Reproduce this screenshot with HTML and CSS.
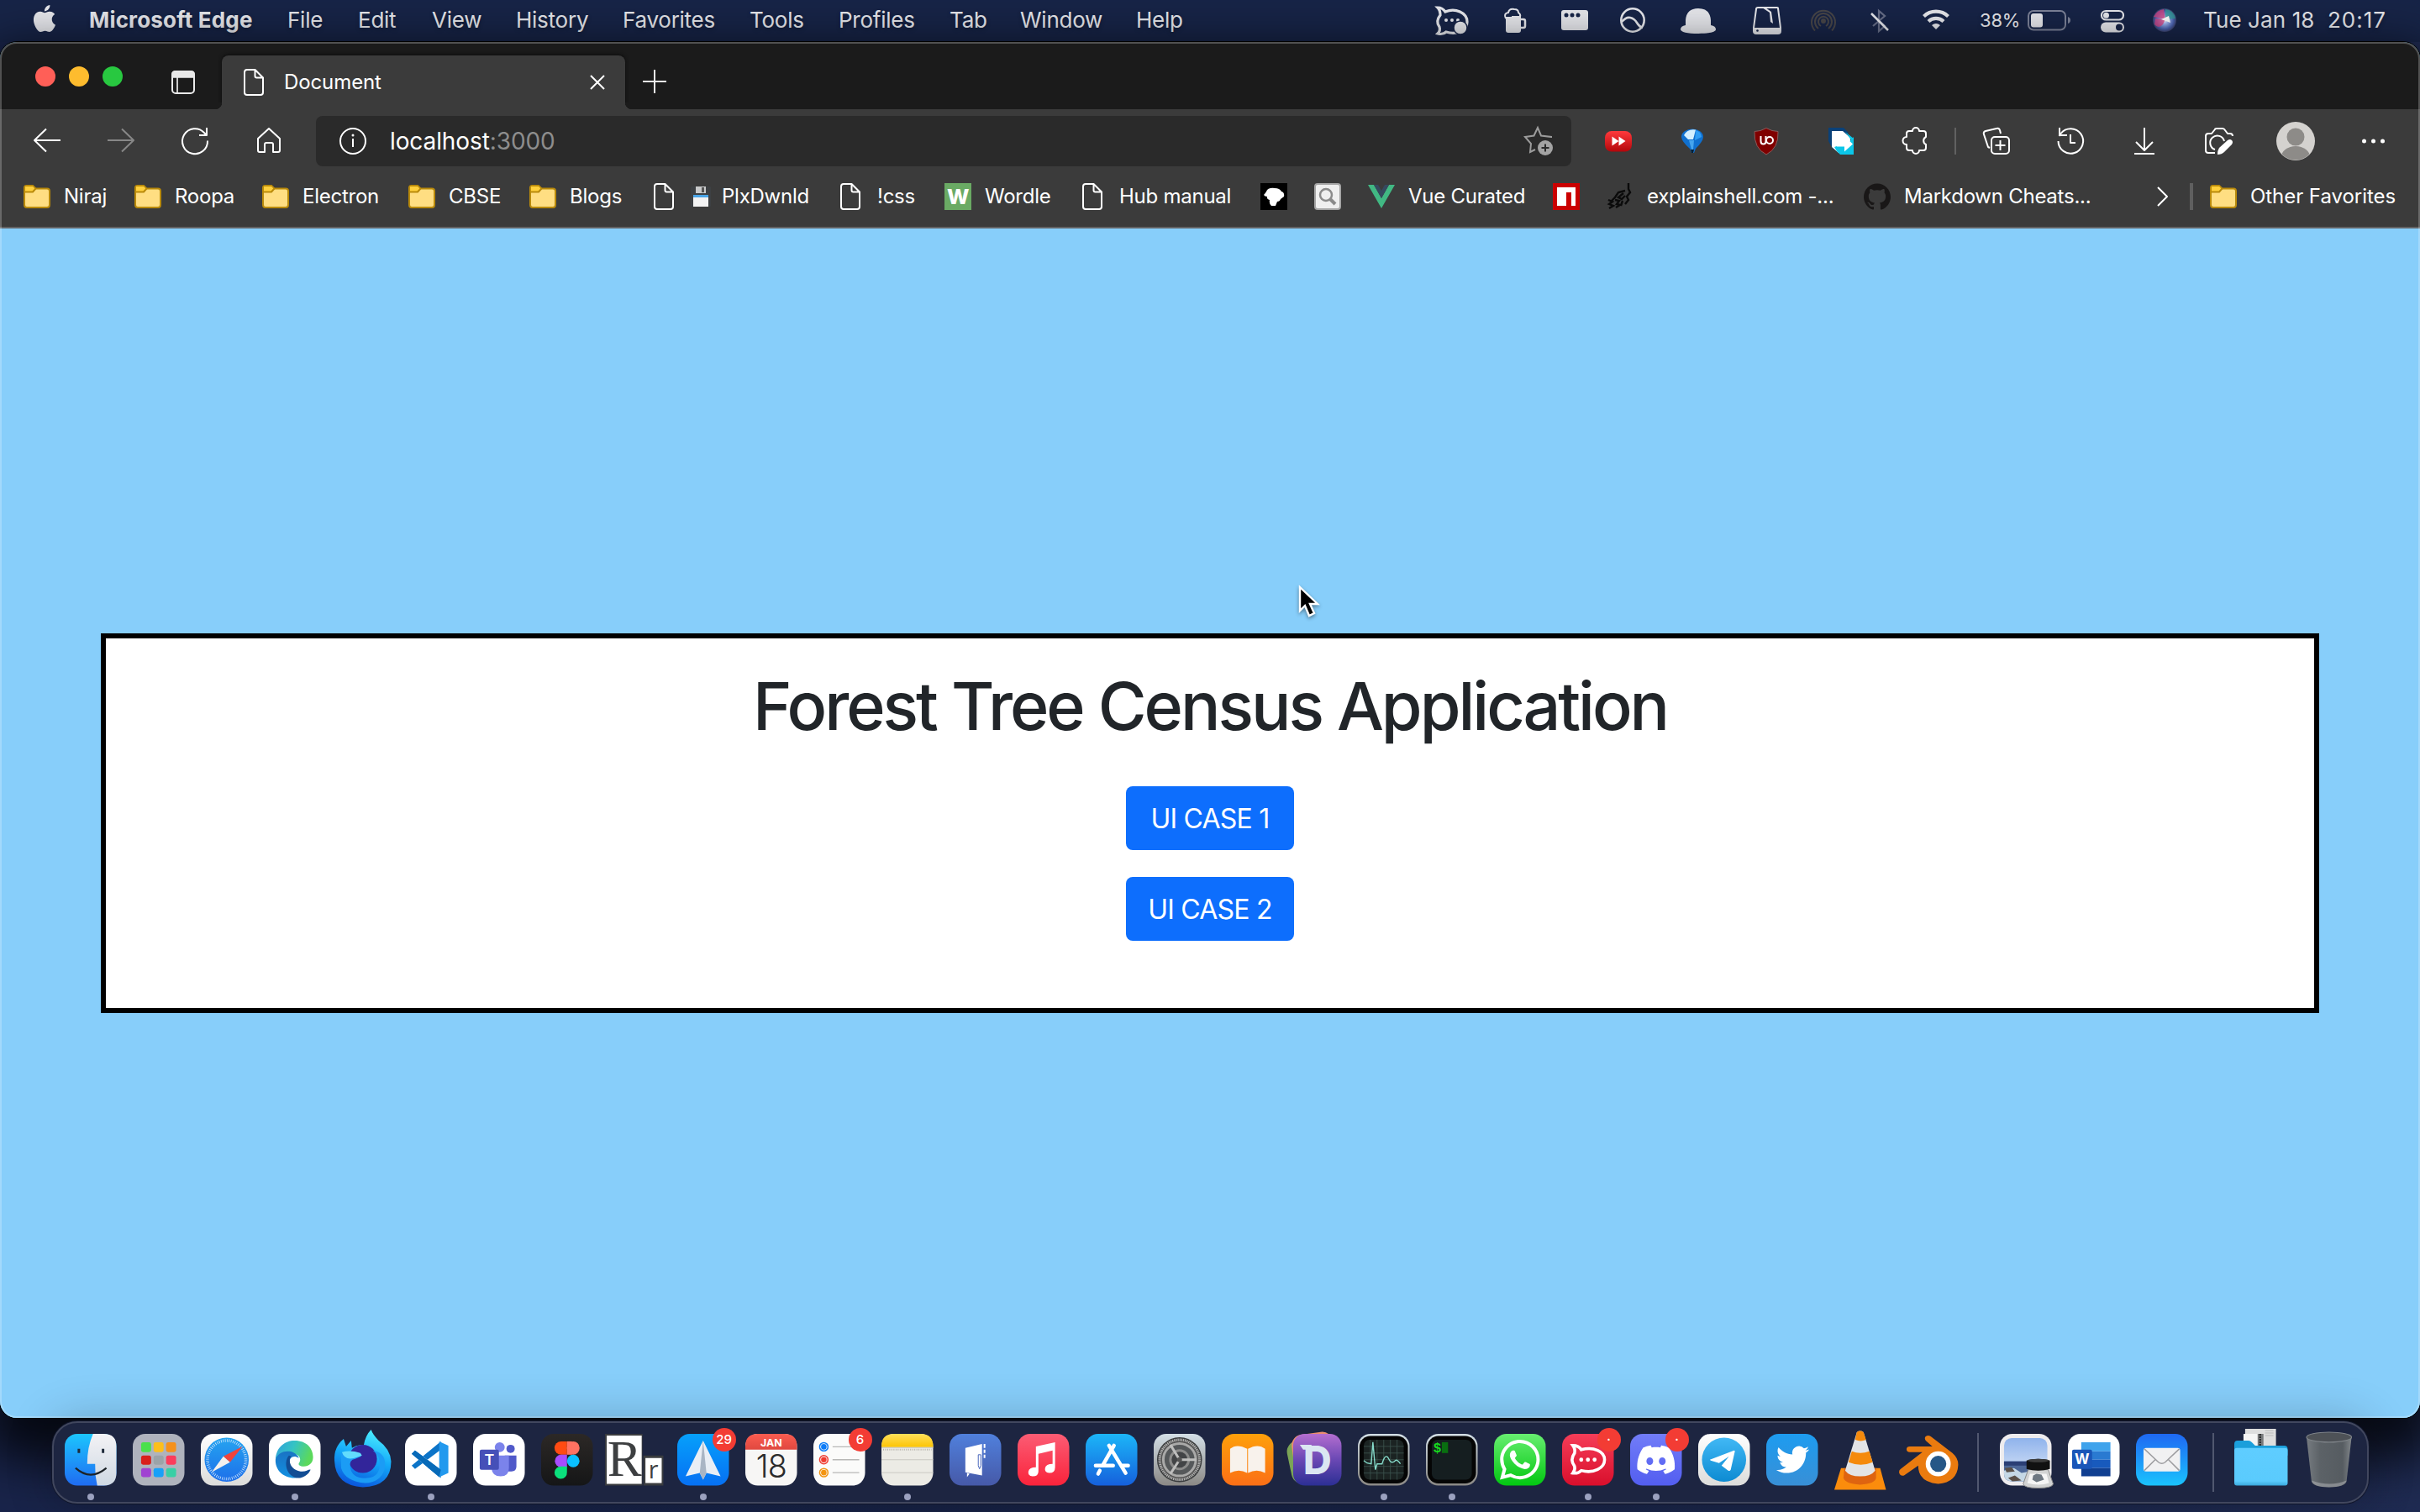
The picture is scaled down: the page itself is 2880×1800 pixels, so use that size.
FILE: index.html
```html
<!DOCTYPE html>
<html lang="en">
<head>
<meta charset="utf-8">
<title>Document</title>
<link rel="stylesheet" href="styles.css">
</head>
<body>
<svg class="defs" width="0" height="0">
  <defs>
    <linearGradient id="g-finder" x2="0" y2="1"><stop stop-color="#1cc5fd"/><stop offset="1" stop-color="#1f6cf2"/></linearGradient>
    <linearGradient id="g-light" x2="0" y2="1"><stop stop-color="#f3f2f5"/><stop offset="1" stop-color="#cfd9e3"/></linearGradient>
    <linearGradient id="g-white" x2="0" y2="1"><stop stop-color="#fff"/><stop offset="1" stop-color="#dcdcda"/></linearGradient>
    <linearGradient id="g-blue" x2="0" y2="1"><stop stop-color="#25a4f0"/><stop offset="1" stop-color="#1d6fea"/></linearGradient>
    <linearGradient id="g-edge" x2="1" y2=".3"><stop stop-color="#2f9fdd"/><stop offset=".5" stop-color="#35c3c4"/><stop offset="1" stop-color="#5bd95c"/></linearGradient>
    <linearGradient id="g-edge2" x2="0" y2="1"><stop stop-color="#1a73c4"/><stop offset="1" stop-color="#1290e0"/></linearGradient>
    <linearGradient id="g-fox" x1=".7" x2=".4" y2="1"><stop stop-color="#4ef0ff"/><stop offset=".5" stop-color="#13a8f8"/><stop offset="1" stop-color="#0a56dd"/></linearGradient>
    <linearGradient id="g-figma" x2="0" y2="1"><stop stop-color="#2c2826"/><stop offset="1" stop-color="#151617"/></linearGradient>
    <linearGradient id="g-spark" x2="0" y2="1"><stop stop-color="#06a0fb"/><stop offset="1" stop-color="#0670f3"/></linearGradient>
    <linearGradient id="g-red" x2="0" y2="1"><stop stop-color="#fb5c50"/><stop offset="1" stop-color="#e0483f"/></linearGradient>
    <linearGradient id="g-yellow" x2="0" y2="1"><stop stop-color="#ffe05a"/><stop offset="1" stop-color="#fcc404"/></linearGradient>
    <linearGradient id="g-book" x2="0" y2="1"><stop stop-color="#5080dc"/><stop offset="1" stop-color="#4659a8"/></linearGradient>
    <linearGradient id="g-music" x2="0" y2="1"><stop stop-color="#fb5c74"/><stop offset="1" stop-color="#fa233b"/></linearGradient>
    <linearGradient id="g-store" x2="0" y2="1"><stop stop-color="#1cb6f8"/><stop offset="1" stop-color="#1560dc"/></linearGradient>
    <linearGradient id="g-set" x2="0" y2="1"><stop stop-color="#d3dfe6"/><stop offset="1" stop-color="#8b8985"/></linearGradient>
    <linearGradient id="g-orange" x2="0" y2="1"><stop stop-color="#fea00a"/><stop offset="1" stop-color="#fb6f16"/></linearGradient>
    <linearGradient id="g-dash" x2="0" y2="1"><stop stop-color="#b46ed0"/><stop offset=".5" stop-color="#6a48b4"/><stop offset="1" stop-color="#2c2f94"/></linearGradient>
    <linearGradient id="g-wa" x2="0" y2="1"><stop stop-color="#67ee70"/><stop offset="1" stop-color="#02c711"/></linearGradient>
    <linearGradient id="g-rc" x2="0" y2="1"><stop stop-color="#f53d58"/><stop offset="1" stop-color="#d90f2c"/></linearGradient>
    <linearGradient id="g-dis" x2="0" y2="1"><stop stop-color="#717cf8"/><stop offset="1" stop-color="#535ef0"/></linearGradient>
    <linearGradient id="g-tg" x2="0" y2="1"><stop stop-color="#41b8f5"/><stop offset="1" stop-color="#0d8bd2"/></linearGradient>
    <linearGradient id="g-tw" x2="0" y2="1"><stop stop-color="#1d9cf0"/><stop offset="1" stop-color="#388fd6"/></linearGradient>
    <linearGradient id="g-mail" x2="0" y2="1"><stop stop-color="#1f68f3"/><stop offset="1" stop-color="#1ac3fd"/></linearGradient>
    <linearGradient id="g-sky" x2="0" y2="1"><stop stop-color="#8fb3ec"/><stop offset=".5" stop-color="#b9cff2"/></linearGradient>
    <linearGradient id="g-bin"><stop stop-color="#767b80"/><stop offset=".3" stop-color="#5c6267"/><stop offset=".8" stop-color="#565c61"/><stop offset="1" stop-color="#81868a"/></linearGradient>
    <linearGradient id="g-bfolder" x2="0" y2="1"><stop stop-color="#5fcdff"/><stop offset=".88" stop-color="#5acbfd"/><stop offset="1" stop-color="#3aa9dc"/></linearGradient>
    <linearGradient id="g-yt" x2="0" y2="1"><stop stop-color="#ff3a3c"/><stop offset="1" stop-color="#b3060b"/></linearGradient>
    <radialGradient id="g-siri"><stop stop-color="#fff"/><stop offset=".3" stop-color="#9fb4ee"/><stop offset=".75" stop-color="#4a63b0"/><stop offset="1" stop-color="#39406a"/></radialGradient>
    <symbol id="folder" viewBox="0 0 32 32"><path d="M1 8V5.500Q1 3 3.500 3H11l3.500 3.500H28Q31 6.500 31 9.500V26Q31 29 28 29H4Q1 29 1 26z" fill="#ffde82" stroke="#b98a0b" stroke-width="2"/><path d="M2 4h9l2.500 2.700L11 10H2z" fill="#ffd03c"/><path d="M1 10.500h10l3.500-4" fill="none" stroke="#b98a0b" stroke-width="2"/></symbol>
    <symbol id="file" viewBox="0 0 32 32"><path d="M8 1h9.500L27 10.500V28Q27 31 24 31H8Q5 31 5 28V4Q5 1 8 1zM17.500 1v7.500Q17.500 10.500 19.500 10.500H27" fill="none" stroke="#fff" stroke-width="2" stroke-linejoin="round"/></symbol>
  </defs>
</svg>

<header class="menubar">
  <nav class="menus">
    <svg class="apple" viewBox="0 0 24 24"><path d="M12.152 6.896c-.948 0-2.415-1.078-3.960-1.040-2.040.027-3.910 1.183-4.961 3.014-2.117 3.675-.546 9.103 1.519 12.090 1.013 1.454 2.208 3.090 3.792 3.039 1.520-.065 2.090-.987 3.935-.987 1.831 0 2.350.987 3.960.948 1.637-.026 2.676-1.480 3.676-2.948 1.156-1.688 1.636-3.325 1.662-3.415-.039-.013-3.182-1.221-3.220-4.857-.026-3.040 2.480-4.494 2.597-4.559-1.429-2.090-3.623-2.324-4.390-2.376-2-.156-3.675 1.090-4.610 1.090zM15.530 3.830c.843-1.012 1.400-2.427 1.245-3.830-1.207.052-2.662.805-3.532 1.818-.780.896-1.454 2.338-1.273 3.714 1.338.104 2.715-.688 3.559-1.701"/></svg>
    <b>Microsoft Edge</b><span>File</span><span>Edit</span><span>View</span><span>History</span><span>Favorites</span><span>Tools</span><span>Profiles</span><span>Tab</span><span>Window</span><span>Help</span>
  </nav>
  <div class="status">
    <svg viewBox="1700 0 80 49"><g fill="none" stroke="#e6e7ec" stroke-width="3.200"><path d="M1711 9c4 0 7 2 9 5 12-5 26 1 26 12 0 10-12 16-25 12-2 2-6 3-10 2 2-2 3-5 2-8-3-4-3-9 1-14 0-4-1-7-3-9z"/></g><g fill="#e6e7ec"><circle cx="1721" cy="24" r="2"/><circle cx="1728" cy="24" r="2"/><circle cx="1735" cy="24" r="2"/><circle cx="1738" cy="33" r="8" stroke="#172447" stroke-width="1.500"/></g></svg>
    <svg viewBox="1780 0 70 49"><path d="M1792 20h18v16q0 3-3 3h-12q-3 0-3-3z" fill="#e6e7ec"/><path d="M1810 23h3q2 0 2 2v6q0 2-2 2h-3" fill="none" stroke="#e6e7ec" stroke-width="2.500"/><path d="M1792 22q-3-6 3-7 1-5 7-4 5 0 5 4 3 2 2 5h-10" fill="none" stroke="#e6e7ec" stroke-width="2"/></svg>
    <svg viewBox="1850 0 70 49"><rect x="1858" y="12" width="32" height="24" rx="3" fill="#e6e7ec"/><g fill="#172447"><circle cx="1864" cy="18" r="2.500"/><circle cx="1871" cy="18" r="2.500"/><circle cx="1878" cy="18" r="2.500"/></g></svg>
    <svg viewBox="1920 0 70 49"><g fill="none" stroke="#e6e7ec" stroke-width="2.600"><circle cx="1943" cy="24" r="13.700"/><path d="M1930 26q5-6 10-5 5 1 8 6t7 6"/></g></svg>
    <svg viewBox="1990 0 86 49"><path d="M2006 30V24q1-14 15-14t15 14v6q6 1 6 5c0 3-8 5-21 5s-21-2-21-5q0-4 6-5z" fill="#e6e7ec"/></svg>
    <svg viewBox="2076 0 70 49"><path d="M2092 9h23q1 0 1 1l3 23v4q0 3-3 3h-26q-3 0-3-3v-4l3-22q0-2 2-2z" fill="none" stroke="#e6e7ec" stroke-width="2"/><path d="M2087 33h32v4q0 3-3 3h-26q-3 0-3-3zM2097 9l9 6 1 11 3 2-2-14-7-5z" fill="#e6e7ec"/><circle cx="2091.500" cy="36.500" r="1.300" fill="#172447"/></svg>
    <svg viewBox="2146 0 70 49"><g fill="none" stroke="#484648" stroke-width="2"><circle cx="2170" cy="25" r="2" fill="#484648"/><path d="M2167 31a6 6 0 1 1 6 0M2164 34a10 10 0 1 1 12 0M2160 36.500a14 14 0 1 1 20 0"/></g></svg>
    <svg viewBox="2216 0 64 49"><path d="M2229 18l14 13-7 6V13l7 6-14 12" fill="none" stroke="#676e88" stroke-width="2.200"/><path d="M2227 16l20 20" stroke="#e6e7ec" stroke-width="2.500"/></svg>
    <svg viewBox="2280 0 70 49"><g fill="none" stroke="#e6e7ec" stroke-width="4.200"><path d="M2289.500 19.500a21 21 0 0 1 29 0M2295 25.500a13 13 0 0 1 18 0"/></g><path d="M2299 30q5-4 10 0l-5 5z" fill="#e6e7ec"/></svg>
    <span class="pct">38%</span>
    <svg viewBox="2406 0 84 49"><rect x="2414" y="13" width="44" height="22.500" rx="6" fill="none" stroke="#7c8298" stroke-width="2"/><rect x="2417" y="16" width="14" height="16.500" rx="3" fill="#e6e7ec"/><path d="M2461 20q3 1 3 4t-3 4z" fill="#7c8298"/></svg>
    <svg viewBox="2490 0 62 49"><rect x="2501" y="13" width="26" height="10.500" rx="5.200" fill="none" stroke="#e6e7ec" stroke-width="2.200"/><circle cx="2506.500" cy="18.200" r="3.500" fill="#e6e7ec"/><rect x="2500" y="26.500" width="28" height="12" rx="6" fill="#e6e7ec"/><circle cx="2522" cy="32.500" r="4" fill="#172447"/></svg>
    <svg viewBox="2552 0 64 49"><circle cx="2576" cy="24" r="14" fill="url(#g-siri)"/><path d="M2563 20q4-8 12-9l2 12zM2564 29q5 6 10 0l3-6-12-1z" fill="#d8407f" opacity=".75"/><path d="M2577 11q10 1 12 11l-12 1z" fill="#2f9f95" opacity=".7"/><path d="M2572 23l9-4 2 8z" fill="#fff"/></svg>
    <span>Tue Jan 18</span><span class="clock">20:17</span>
  </div>
</header>

<main class="window">
  <div class="tabstrip">
    <div class="lights"><i class="red"></i><i class="amber"></i><i class="green"></i></div>
    <svg class="vtabs" viewBox="0 0 28 28"><rect x="1" y="1" width="26" height="26" rx="4" fill="none" stroke="#e9e9e9" stroke-width="2"/><path d="M1 8V4q0-3 3-3h20q3 0 3 3v4zM7 8v19" fill="#e9e9e9" stroke="#e9e9e9" stroke-width="1.700"/></svg>
    <div class="tab"><svg width="32" height="32"><use href="#file"/></svg><span>Document</span><svg class="close" viewBox="0 0 18 18"><path d="M1 1l16 16M17 1L1 17" stroke="#fff" stroke-width="2"/></svg></div>
    <svg class="plus" viewBox="0 0 28 28"><path d="M14 0v28M0 14h28" stroke="#eee" stroke-width="2"/></svg>
  </div>

  <div class="toolbar">
    <svg viewBox="0 130 100 76"><path d="M72 167H41M55 153.500L41 167l14 13.500" class="ln"/></svg>
    <svg viewBox="100 130 90 76"><path d="M128 167h31M145 153.500l14 13.500-14 13.500" class="ln dim"/></svg>
    <svg viewBox="190 130 90 76"><path d="M247 167.500a15 15 0 1 1-4-9.500l3 3M246 152v9h-9" class="ln"/></svg>
    <svg viewBox="280 130 96 76"><path d="M307 165l13-12 13 12v14q0 2-2 2h-6v-9q0-2-2-2h-6q-2 0-2 2v9h-6q-2 0-2-2z" class="ln"/></svg>
    <div class="omnibox">
      <svg class="info" viewBox="0 0 32 32"><circle cx="16" cy="16" r="15" class="ln"/><path d="M16 13v10" class="ln"/><circle cx="16" cy="9" r="1.500" fill="#fff"/></svg>
      <span>localhost<em>:3000</em></span>
      <svg class="star" viewBox="1812 150 40 38"><path d="M1846 165v-1l-12-1.500-4-9.500-4.500 9.500-10.500 1.500 7 8-1 10 6-3" fill="none" stroke="#9b9b9b" stroke-width="2"/><circle cx="1839" cy="177" r="9" fill="#a3a3a3"/><path d="M1834.500 177h9M1839 172.500v9" stroke="#2a2a2a" stroke-width="2"/></svg>
    </div>
    <svg viewBox="1880 130 90 76"><rect x="1910" y="156" width="32" height="24.500" rx="8" fill="url(#g-yt)"/><path d="M1918.500 162.500l8 5.500-8 5.500zM1926.500 162.500l8 5.500-8 5.500z" fill="#fff"/></svg>
    <svg viewBox="1970 130 86 76"><path d="M2001 163a13 9.500 0 0 1 26 0q0 5-9 14l-2 5h-3l-2-5q-10-9-10-14z" fill="#1070cf"/><path d="M2004 161q4-8 14-6.500l-3 11.500h-6z" fill="#d3efff"/><path d="M2018 155q6 1 7 8l-8 4z" fill="#2f9cf3"/><path d="M2010 167h6l-1 11h-2z" fill="#45a5ee"/><path d="M2012 178h4l-1 4h-2z" fill="#082035"/></svg>
    <svg viewBox="2056 130 88 76"><path d="M2102 152.500q7 4 14 4 1 20-14 27.500-15-7.500-14-27.500 7 0 14-4z" fill="#800000" stroke="#8b5a5a" stroke-width="1"/><path d="M2095.500 162v6q0 3.500 3 3.500t3-3.500v-6" fill="none" stroke="#fff" stroke-width="2"/><circle cx="2106" cy="167" r="4" fill="none" stroke="#fff" stroke-width="2"/></svg>
    <svg viewBox="2144 130 88 76"><path d="M2176 152h18l6 6-14 18-4 2q-3-4-6-10z" fill="#0a4178"/><path d="M2180 156h13l9 8v4l-14 14-8-7z" fill="#fff"/><path d="M2183 175l3-1h10l10-11v21h-16q-5-4-7-9zM2196 157l10 8v6z" fill="#0bc6e8"/><path d="M2186 168h9v-6l10 9.500-10 9v-6h-9z" fill="#fff"/></svg>
    <svg viewBox="2232 130 88 76"><path d="M2272 156h4a4 4 0 0 1 8 0h5q3 0 3 3v4a5 5 0 0 0 0 9v4q0 3-3 3h-5a4 4 0 0 1-8 0h-4q-3 0-3-3v-4a4.500 4.500 0 0 1 0-9v-4q0-3 3-3z" class="ln"/></svg>
    <svg viewBox="2320 130 20 76"><path d="M2327 152v32" stroke="#616161" stroke-width="2"/></svg>
    <svg viewBox="2340 130 80 76"><rect x="2370" y="163" width="21" height="20" rx="4" class="ln"/><path d="M2380.500 167v12M2374.500 173h12M2368 176l-2-1-5-15q-1-3 2-4l13-3q3-1 4 2l1 4" class="ln"/></svg>
    <svg viewBox="2420 130 88 76"><path d="M2449.500 168a14.800 14.800 0 1 0 3-9l-2 3M2451 152v9h9M2464 160v10h6" class="ln"/></svg>
    <svg viewBox="2508 130 88 76"><path d="M2552 152v27M2542 169l10 10 10-10M2540 183h24" class="ln"/></svg>
    <svg viewBox="2596 130 94 76"><path d="M2636 182h-8q-3 0-3-3v-17q0-3 3-3h4l4-5q0-1 2-1h7q2 0 3 2l3 4h3q3 0 3 3M2636 178a8.500 8.500 0 1 1 11-10" class="ln"/><path d="M2641 176l10-9q3-2 5 0t0 5l-9 9q-3 3-8 3 0-5 2-8z" fill="#fff"/></svg>
    <svg viewBox="2690 130 90 76"><clipPath id="av"><circle cx="2732" cy="168" r="22.500"/></clipPath><circle cx="2732" cy="168" r="23" fill="#d4d2cf"/><g clip-path="url(#av)" fill="#8d8b88"><circle cx="2732" cy="163" r="10.500"/><ellipse cx="2732" cy="187" rx="17" ry="13"/></g></svg>
    <svg viewBox="2780 130 100 76"><g fill="#fff"><circle cx="2813.500" cy="168" r="2.500"/><circle cx="2824.500" cy="168" r="2.500"/><circle cx="2835.500" cy="168" r="2.500"/></g></svg>
  </div>

  <div class="favorites">
    <a><svg><use href="#folder"/></svg>Niraj</a>
    <a><svg><use href="#folder"/></svg>Roopa</a>
    <a><svg><use href="#folder"/></svg>Electron</a>
    <a><svg><use href="#folder"/></svg>CBSE</a>
    <a><svg><use href="#folder"/></svg>Blogs</a>
    <a><svg><use href="#file"/></svg><svg class="floppy" viewBox="0 0 24 24"><rect width="24" height="24" rx="1" fill="#3d4043"/><rect x="6" width="12" height="8" fill="#c9cacb"/><rect x="13" y="1" width="3" height="6" fill="#555"/><rect x="3" y="10" width="18" height="4" fill="#4aa5e8"/><rect x="3" y="13" width="18" height="11" fill="#f3f3f3"/></svg>PlxDwnld</a>
    <a><svg><use href="#file"/></svg>!css</a>
    <a><svg viewBox="0 0 32 32"><rect width="32" height="32" fill="#6aaa64"/><text x="16" y="25" class="wordle">W</text></svg>Wordle</a>
    <a><svg><use href="#file"/></svg>Hub manual</a>
    <a><svg viewBox="0 0 32 32"><rect width="32" height="32"/><path d="M4 14q2-2 3-4 2-5 10-4 6 0 8 4 4 1 3 6l-4 3q-1 3-4 3l-2 5h-5q-3-3-2-7-4-1-3-4-3 0-4-2z" fill="#fff"/></svg></a>
    <a><svg viewBox="0 0 32 32"><rect x="1" y="1" width="30" height="30" rx="3" fill="#efefef" stroke="#a5a5a5" stroke-width="2"/><circle cx="14" cy="14" r="7" fill="none" stroke="#8b8b8b" stroke-width="2.500"/><path d="M19 19l6 6" stroke="#8b8b8b" stroke-width="4"/></svg></a>
    <a><svg viewBox="0 0 32 32"><path d="M0 2h7l9 16 9-16h7L16 30z" fill="#41b883"/><path d="M7 2h5l4 7 4-7h5L16 18z" fill="#35495e"/></svg>Vue Curated</a>
    <a><svg viewBox="0 0 32 32"><rect width="32" height="32" fill="#cb0000"/><path d="M5 5h22v22h-5V11h-6v16H5z" fill="#fff"/></svg></a>
    <a><svg viewBox="0 0 32 32"><path d="M26 0v7l2 4-4 5 2 4-4 5M22 9l-8 2-4 6-4 4M20 12l-6 5 4 2 4-4M2 20l5 2-4 3 5 2-5 3M10 20l5 1-3 4 4 1-5 3M19 21l-2 6" fill="none" stroke="#0b0b0b" stroke-width="2.400"/></svg>explainshell.com -...</a>
    <a><svg viewBox="0 0 24 24"><path fill="#191717" d="M12 .297c-6.630 0-12 5.373-12 12 0 5.303 3.438 9.800 8.205 11.385.6.113.82-.258.82-.577 0-.285-.010-1.040-.015-2.040-3.338.724-4.042-1.610-4.042-1.610C4.422 18.070 3.633 17.700 3.633 17.700c-1.087-.744.084-.729.084-.729 1.205.084 1.838 1.236 1.838 1.236 1.070 1.835 2.809 1.305 3.495.998.108-.776.417-1.305.76-1.605-2.665-.3-5.466-1.332-5.466-5.930 0-1.310.465-2.380 1.235-3.220-.135-.303-.54-1.523.105-3.176 0 0 1.005-.322 3.300 1.230.96-.267 1.980-.399 3-.405 1.020.006 2.040.138 3 .405 2.280-1.552 3.285-1.230 3.285-1.230.645 1.653.24 2.873.12 3.176.765.84 1.230 1.910 1.230 3.220 0 4.610-2.805 5.625-5.475 5.920.42.36.81 1.096.81 2.220 0 1.606-.015 2.896-.015 3.286 0 .315.21.69.825.57C20.565 22.092 24 17.592 24 12.297c0-6.627-5.373-12-12-12"/></svg>Markdown Cheats...</a>
    <a><svg viewBox="0 0 32 32"><path d="M10 5l11 11-11 11" class="ln"/></svg></a>
    <i class="divider"></i>
    <a class="other"><svg><use href="#folder"/></svg>Other Favorites</a>
  </div>

  <section class="page">
    <div class="card">
      <h1>Forest Tree Census Application</h1>
      <button>UI CASE 1</button>
      <button>UI CASE 2</button>
    </div>
  </section>
</main>

<footer class="dock">
  <div class="app on"><svg viewBox="0 0 62 62"><rect width="62" height="62" rx="15" fill="url(#g-finder)"/><path d="M34 0h13q15 0 15 15v32q0 15-15 15h-8q-3-13-2.500-26H27q0-20 7-36z" fill="url(#g-light)"/><path d="M17 18v5M46 18v5" stroke="#1e2a3a" stroke-width="3"/><path d="M13 41q18 16 37 0" fill="none" stroke="#1d2328" stroke-width="2.200"/></svg></div>
  <div class="app"><svg viewBox="0 0 62 62"><rect width="62" height="62" rx="15" fill="#afb3bd"/><g><rect x="10" y="10" width="12" height="12" rx="2.500" fill="#4be04b"/><rect x="25" y="10" width="12" height="12" rx="2.500" fill="#fdbf1c"/><rect x="40" y="10" width="12" height="12" rx="2.500" fill="#f5911b"/><rect x="10" y="26" width="12" height="11" rx="2.500" fill="#d9201c"/><rect x="25" y="26" width="12" height="11" rx="2.500" fill="#9ba3a8"/><rect x="40" y="26" width="12" height="11" rx="2.500" fill="#fb3c5c"/><rect x="10" y="41" width="12" height="11" rx="2.500" fill="#a043d2"/><rect x="25" y="41" width="12" height="11" rx="2.500" fill="#18a0f8"/><rect x="40" y="41" width="12" height="11" rx="2.500" fill="#38cfa5"/></g></svg></div>
  <div class="app"><svg viewBox="0 0 62 62"><rect width="62" height="62" rx="15" fill="url(#g-white)"/><circle cx="31" cy="31" r="26.500" fill="url(#g-blue)"/><circle cx="31" cy="31" r="23" fill="none" stroke="#cfe6fb" stroke-width="3.500" stroke-dasharray=".8 1.600"/><path d="M50 15L27 27l8 7z" fill="#f0443c"/><path d="M13 46l14-19 8 7z" fill="#f4f1ee"/></svg></div>
  <div class="app on"><svg viewBox="0 0 62 62"><rect width="62" height="62" rx="15" fill="#fff"/><path d="M8 30C9 16 19 8 31 8c14 0 22 9 22 20 0 7-5 11-11 11-5 0-7-2-6-4 3-3 2-10-6-11-8-1-16 2-22 6z" fill="url(#g-edge)"/><path d="M8 30c3-7 10-10 17-9 6 1 10 5 11 8-7-4-11 0-11 4 0 9 8 16 17 16-3 3-8 4-11 4C17 53 7 43 8 30z" fill="url(#g-edge2)"/><path d="M24 26c-7 8-3 26 11 27 7 0 13-5 15-10-2-1-6 3-12 2-8-1-13-7-13-13 0-3 1-4 2-5z" fill="#124d94"/></svg></div>
  <div class="app"><svg viewBox="0 0 62 62"><path d="M-3 32Q-4 16 8 6l3 9 6-7 1 9q7-5 14-3Q34 2 41-5q2 6 9 13 14 10 15 25 0 30-34 31Q-2 62-3 32z" fill="url(#g-fox)"/><circle cx="31" cy="30" r="17" fill="#32259a"/><path d="M5 23q8-2 21 0l3 4-7 3q-8 1-6 11 3 13 20 12 17-1 15-20-1-8-8-13 18 3 14 23-5 15-23 16Q10 57 5 41z" fill="#1b9cf5"/><path d="M6 22q10-3 22 1l2 3-9 3Q9 32 6 22z" fill="#62dcfc"/></svg></div>
  <div class="app on"><svg viewBox="0 0 62 62"><rect width="62" height="62" rx="15" fill="#fff"/><path d="M8 24l4-4L43 43v10zM8 38l4 4L43 19V9z" fill="#0c74c8"/><path d="M41 9l11 5v33l-11 5z" fill="#2299ee"/><path d="M8 24l4-4 31 23-2 9z" fill="#076ab8"/></svg></div>
  <div class="app"><svg viewBox="0 0 62 62"><rect width="62" height="62" rx="15" fill="#fff"/><g fill="#5059c9"><circle cx="45" cy="18" r="5"/><path d="M38 26h14v13q0 6-6 6h-5z"/></g><g fill="#7b83eb"><circle cx="32" cy="16" r="6"/><path d="M22 26h21v15q0 10-10 10t-11-10z"/></g><rect x="8" y="19" width="23" height="24" rx="2" fill="#4650b8"/><text x="19.500" y="37.500" class="glyph" font-size="18" font-weight="600">T</text></svg></div>
  <div class="app"><svg viewBox="0 0 62 62"><rect width="62" height="62" rx="15" fill="url(#g-figma)"/><path d="M31 9v16h-7a8 8 0 0 1 0-16z" fill="#ff4b12"/><rect x="31" y="9" width="15" height="16" rx="7.500" fill="#ff7262"/><path d="M31 9h6v16h-6z" fill="#ff7262"/><path d="M31 25v15h-7a7.500 7.500 0 0 1 0-15z" fill="#a84cff"/><circle cx="38.500" cy="32.500" r="7.500" fill="#0ac0ff"/><path d="M31 39v7a7.500 7.500 0 1 1-7-7z" fill="#0be07c"/></svg></div>
  <div class="app"><svg class="nudge" viewBox="0 0 62 62"><path d="M-3 0h45v62H-3zM43 26h24v36H43z" fill="#3a3c3f"/><path d="M-1 2h42v58H-1zM45.500 29H65v30H45.500z" fill="#fff"/><text x="20.500" y="50.500" class="serif" font-size="62">R</text><text x="55" y="53" class="sans" font-size="29">r</text></svg></div>
  <div class="app on"><svg viewBox="0 0 62 62"><rect width="62" height="62" rx="15" fill="url(#g-spark)"/><path d="M31 8l21 43-17-4-4 8-4-8-17 4z" fill="#e9eef5"/><path d="M31 8l4 39-4 8-4-8z" fill="#a9b5c4"/></svg><b class="badge">29</b></div>
  <div class="app"><svg viewBox="0 0 62 62"><rect width="62" height="62" rx="15" fill="#f7f6f5"/><path d="M0 19v-4Q0 0 15 0h32q15 0 15 15v4z" fill="url(#g-red)"/><text x="31" y="15" class="glyph" font-size="12.500" font-weight="700">JAN</text><text x="31" y="52" class="day">18</text></svg></div>
  <div class="app"><svg viewBox="0 0 62 62"><rect width="62" height="62" rx="15" fill="#fbfbfa"/><g stroke="#b8b8b6" stroke-width="1.300"><path d="M23 15.500h32M23 31h32M23 46.500h32"/></g><g stroke-width="1.500" fill="none"><circle cx="12.500" cy="15.500" r="5" stroke="#0a7bf7"/><circle cx="12.500" cy="31" r="5" stroke="#f03c31"/><circle cx="12.500" cy="46.500" r="5" stroke="#f39512"/></g><circle cx="12.500" cy="15.500" r="3.300" fill="#0a7bf7"/><circle cx="12.500" cy="31" r="3.300" fill="#f03c31"/><circle cx="12.500" cy="46.500" r="3.300" fill="#f39512"/></svg><b class="badge">6</b></div>
  <div class="app on"><svg viewBox="0 0 62 62"><rect width="62" height="62" rx="15" fill="#ecebe5"/><path d="M0 16v-1Q0 0 15 0h32q15 0 15 15v1z" fill="url(#g-yellow)"/><path d="M0 31h62M0 46.500h62M0 16.500h62" stroke="#c9c8c2"/><path d="M2 19h58" stroke="#b5b3ac" stroke-width="2" stroke-dasharray="1 1.500"/></svg></div>
  <div class="app"><svg viewBox="0 0 62 62"><rect width="62" height="62" rx="15" fill="url(#g-book)"/><path d="M19 17l20-5v38L19 46zM21 47l3 1-3 4zM41 12h2v5h-2zM41 19h2v4h-2zM41 25h2v4h-2z" fill="#fff"/><path d="M34.500 25v13l1.500 4 1.500-4V25z" fill="#fff" stroke="#4a67bc"/></svg></div>
  <div class="app"><svg viewBox="0 0 62 62"><rect width="62" height="62" rx="15" fill="url(#g-music)"/><path d="M22 15l23-5v30q0 7-7 7-6-1-5-6 1-5 9-5V20l-17 4v21q0 6-7 6-6-1-5-6 1-5 9-5z" fill="#fff"/></svg></div>
  <div class="app"><svg viewBox="0 0 62 62"><rect width="62" height="62" rx="15" fill="url(#g-store)"/><path d="M34 14L21 37M28 14l20 33M12 38h21M43 38h8M17 44l-2 4" stroke="#fff" stroke-width="4.500" stroke-linecap="round"/></svg></div>
  <div class="app"><svg viewBox="0 0 62 62"><rect width="62" height="62" rx="15" fill="url(#g-set)"/><circle cx="31" cy="31" r="27" fill="#3b3d3e"/><circle cx="31" cy="31" r="24" fill="#555" stroke="#b1b1b0" stroke-width="3" stroke-dasharray="1.400 .8"/><circle cx="31" cy="31" r="19.500" fill="#55585a" stroke="#a9a9a8" stroke-width="3"/><circle cx="31" cy="31" r="11" fill="#424446" stroke="#8b8b8a" stroke-width="3"/><path d="M31 31h20M31 31L20 13M31 31L20 48" stroke="#bebebd" stroke-width="3"/><circle cx="31" cy="31" r="3" fill="#555"/></svg></div>
  <div class="app"><svg viewBox="0 0 62 62"><rect width="62" height="62" rx="15" fill="url(#g-orange)"/><path d="M10 47V18q8-7 20.500 0v29q-10-6-20.500 0zM31.500 47V18q12-7 20.500 0v29q-10-6-20.500 0z" fill="#f8f2ec"/></svg></div>
  <div class="app"><svg viewBox="0 0 62 62"><rect x="-1" y="6" width="48" height="52" rx="13" fill="#7ba556" transform="rotate(-12 22 32)"/><rect x="4" y="-1" width="50" height="55" rx="13" fill="#ec8e70" transform="rotate(-8 30 26)"/><rect x="4" width="58" height="62" rx="14" fill="url(#g-dash)"/><text x="33" y="48" class="glyph" font-size="47" font-weight="800" style="fill:#dbe6f2">D</text><path d="M12 13h14v6H16z" fill="#dbe6f2"/></svg></div>
  <div class="app on"><svg viewBox="0 0 62 62"><rect width="62" height="62" rx="15" fill="url(#g-set)"/><rect x="2" y="2.500" width="58" height="57" rx="13" fill="#050505"/><rect x="7" y="7" width="48" height="48" rx="7" fill="#1b2322"/><path d="M15 7v48M23 7v48M31 7v48M39 7v48M47 7v48M7 15h48M7 23h48M7 31h48M7 39h48M7 47h48" stroke="#3c5550" stroke-width=".8"/><path d="M7 32l4 3 5 1 2-26 3 33 2-7h6q4-14 8-6 3 7 8 2 2-2 6 4" fill="none" stroke="#86dccb" stroke-width="1.400"/></svg></div>
  <div class="app on"><svg viewBox="0 0 62 62"><rect width="62" height="62" rx="15" fill="url(#g-set)"/><rect x="2" y="2.500" width="58" height="57" rx="13" fill="#050505"/><rect x="7" y="7" width="48" height="48" rx="7" fill="#151e20"/><text x="13.500" y="22" class="prompt">$</text><rect x="19" y="10" width="7.500" height="13" fill="#096f10"/></svg></div>
  <div class="app"><svg viewBox="0 0 62 62"><rect width="62" height="62" rx="15" fill="url(#g-wa)"/><path transform="translate(7 7) scale(2)" fill="#fff" d="M17.472 14.382c-.297-.149-1.758-.867-2.030-.967-.273-.099-.471-.148-.670.150-.197.297-.767.966-.940 1.164-.173.199-.347.223-.644.075-.297-.150-1.255-.463-2.390-1.475-.883-.788-1.480-1.761-1.653-2.059-.173-.297-.018-.458.130-.606.134-.133.298-.347.446-.520.149-.174.198-.298.298-.497.099-.198.050-.371-.025-.520-.075-.149-.669-1.612-.916-2.207-.242-.579-.487-.500-.669-.510-.173-.008-.371-.010-.570-.010-.198 0-.520.074-.792.372-.272.297-1.040 1.016-1.040 2.479 0 1.462 1.065 2.875 1.213 3.074.149.198 2.096 3.200 5.077 4.487.709.306 1.262.489 1.694.625.712.227 1.360.195 1.871.118.571-.085 1.758-.719 2.006-1.413.248-.694.248-1.289.173-1.413-.074-.124-.272-.198-.570-.347m-5.421 7.403h-.004a9.870 9.870 0 01-5.031-1.378l-.361-.214-3.741.982.998-3.648-.235-.374a9.860 9.860 0 01-1.510-5.260c.001-5.450 4.436-9.884 9.888-9.884 2.640 0 5.122 1.030 6.988 2.898a9.825 9.825 0 012.893 6.994c-.003 5.450-4.437 9.884-9.885 9.884m8.413-18.297A11.815 11.815 0 0012.050 0C5.495 0 .160 5.335.157 11.892c0 2.096.547 4.142 1.588 5.945L.057 24l6.305-1.654a11.882 11.882 0 005.683 1.448h.005c6.554 0 11.890-5.335 11.893-11.893a11.821 11.821 0 00-3.480-8.413z"/></svg></div>
  <div class="app on"><svg viewBox="0 0 62 62"><rect width="62" height="62" rx="15" fill="url(#g-rc)"/><path d="M13 14q7 0 10 5c15-4 28 2 28 12s-13 17-28 13q-4 4-10 3 3-4 2-8-6-8 0-16 1-5-2-9z" fill="none" stroke="#fff" stroke-width="3.600"/><g fill="#fff"><circle cx="23" cy="31" r="2.400"/><circle cx="31" cy="31" r="2.400"/><circle cx="39" cy="31" r="2.400"/></g></svg><b class="badge">·</b></div>
  <div class="app on"><svg viewBox="0 0 62 62"><rect width="62" height="62" rx="15" fill="url(#g-dis)"/><path transform="translate(8.500 8.500) scale(1.880)" fill="#fff" d="M20.317 4.370a19.791 19.791 0 00-4.885-1.515.074.074 0 00-.079.037c-.211.375-.445.865-.608 1.250-1.845-.276-3.680-.276-5.487 0-.164-.393-.406-.874-.618-1.250a.077.077 0 00-.079-.037 19.736 19.736 0 00-4.885 1.515.070.070 0 00-.032.028C.533 9.046-.319 13.580.099 18.058a.082.082 0 00.031.056c2.053 1.508 4.041 2.423 5.993 3.029a.078.078 0 00.084-.028c.462-.630.873-1.295 1.226-1.994a.076.076 0 00-.042-.106c-.653-.248-1.274-.550-1.872-.892a.077.077 0 01-.008-.128c.126-.094.252-.192.372-.291a.074.074 0 01.078-.011c3.928 1.793 8.180 1.793 12.061 0a.074.074 0 01.079.010c.120.099.246.198.373.292a.077.077 0 01-.007.128 12.299 12.299 0 01-1.873.891.077.077 0 00-.041.107c.360.698.772 1.363 1.225 1.993a.076.076 0 00.084.029c1.961-.607 3.950-1.522 6.002-3.029a.077.077 0 00.031-.055c.500-5.177-.838-9.674-3.549-13.660a.061.061 0 00-.031-.029zM8.020 15.331c-1.183 0-2.157-1.086-2.157-2.419 0-1.333.956-2.419 2.157-2.419 1.211 0 2.176 1.095 2.157 2.419 0 1.333-.956 2.419-2.157 2.419zm7.975 0c-1.183 0-2.157-1.086-2.157-2.419 0-1.333.955-2.419 2.157-2.419 1.211 0 2.176 1.095 2.157 2.419 0 1.333-.946 2.419-2.157 2.419z"/></svg><b class="badge">·</b></div>
  <div class="app"><svg viewBox="0 0 62 62"><rect width="62" height="62" rx="15" fill="url(#g-white)"/><circle cx="31" cy="31" r="26.500" fill="url(#g-tg)"/><path d="M14 31l29-11q1 0 1 1l-5 22q-1 2-3 1l-8-6 9-11-12 8-10-3z" fill="#fff"/></svg></div>
  <div class="app"><svg viewBox="0 0 62 62"><rect width="62" height="62" rx="15" fill="url(#g-tw)"/><path transform="translate(12 11) scale(1.650)" fill="#fff" d="M23.953 4.570a10 10 0 01-2.825.775 4.958 4.958 0 002.163-2.723c-.951.555-2.005.959-3.127 1.184a4.920 4.920 0 00-8.384 4.482C7.690 8.095 4.067 6.130 1.640 3.162a4.822 4.822 0 00-.666 2.475c0 1.710.870 3.213 2.188 4.096a4.904 4.904 0 01-2.228-.616v.060a4.923 4.923 0 003.946 4.827 4.996 4.996 0 01-2.212.085 4.936 4.936 0 004.604 3.417 9.867 9.867 0 01-6.102 2.105c-.390 0-.779-.023-1.170-.067a13.995 13.995 0 007.557 2.209c9.053 0 13.998-7.496 13.998-13.985 0-.210 0-.420-.015-.630A9.935 9.935 0 0024 4.590z"/></svg></div>
  <div class="app"><svg viewBox="0 0 62 62"><path d="M8 41h47l7 26H0z" fill="#fb8c0c"/><path d="M12 41h38v12q-1 7-19 8-18-1-20-8z" fill="#de6410"/><path d="M27-2q4-3 8 0l14 46q-5 7-18 7t-18-7z" fill="#e3e4e6"/><path d="M27-2q4-3 8 0l3 9q-6 3-13 0zM21 21q10 4 21 0l4 13q-14 6-29 0z" fill="#f58a0c"/></svg></div>
  <div class="app"><svg class="nudge" viewBox="0 0 62 62"><path d="M30 3q3-2 6 0l26 20q7 6 7 14-1 21-24 23-24-2-24-22L4 50q-5 1-6-4 0-3 2-4l26-20H11q-4 0-4-3.500T11 15h27l-8-7q-2-3 0-5z" fill="#ea7b0f"/><circle cx="45" cy="36" r="15" fill="#fff"/><circle cx="45" cy="36" r="9.700" fill="#265787"/></svg></div>
  <i class="split"></i>
  <div class="app"><svg viewBox="0 0 62 62"><rect width="62" height="62" rx="15" fill="#eeecee"/><rect x="5" y="5" width="52" height="52" rx="9" fill="url(#g-sky)"/><path d="M5 33h52v15q0 9-9 9H14q-9 0-9-9z" fill="#4c6697"/><path d="M5 33h52v5H5z" fill="#2b3f75"/><path d="M5 44l12-3 9 6 20-4v14H14q-9 0-9-9z" fill="#c5d8e6"/><path d="M6 41l8-1 4 5-10 1zM10 53l8-3 8 6-11 1z" fill="#5a5049"/><path d="M34 43h24l6 17q-1 5-18 5t-18-5z" fill="#d2d3d3" stroke="#888" stroke-width="1"/><path d="M36 48h20l3 11q-12 4-26 0z" fill="#f5f5f5"/><path d="M40 50l4-2 6 1 3 6-9 3-5-3z" fill="#6e7882"/><path d="M32 32q14-4 28 0v10q-14 4-28 0z" fill="#111"/><ellipse cx="46" cy="32" rx="13" ry="2" fill="#3c3c3c"/></svg></div>
  <div class="app"><svg viewBox="0 0 62 62"><rect width="62" height="62" rx="15" fill="#fff"/><path d="M16 10h35v11H16z" fill="#3fa3ec"/><path d="M16 21h35v10H16z" fill="#2a7ad1"/><path d="M16 31h35v10H16z" fill="#185abd"/><path d="M16 41h35v10H16z" fill="#103f91"/><rect x="5" y="19" width="24" height="23" rx="2" fill="#1a56b8"/><text x="17" y="36.500" class="glyph" font-size="17" font-weight="700">W</text></svg></div>
  <div class="app"><svg viewBox="0 0 62 62"><rect width="62" height="62" rx="15" fill="url(#g-mail)"/><rect x="9" y="17" width="44" height="28" rx="3" fill="#f1f1f2"/><path d="M10 18l17 16q4 3 8 0l17-16M10 44l13-13M52 44L39 31" fill="none" stroke="#9d9da0" stroke-width="1.500"/></svg></div>
  <i class="split"></i>
  <div class="app"><svg viewBox="0 0 62 62"><path d="M12-6h37v28H12z" fill="#dedede"/><path d="M10 0h20v20H10z" fill="#f5f5f5"/><path d="M27 0h7v18h-7z" fill="#77797b"/><path d="M30 0v18" stroke="#222" stroke-width="2" stroke-dasharray="2 1"/><path d="M36-4h10M36-1h10M36 2h10" stroke="#bbb"/><path d="M-1 12q0-4 4-4h13q2 0 4 2l4 4h35q4 0 4 4v8H-1z" fill="#1b9fdb"/><rect x="-1" y="17" width="64" height="45" rx="3" fill="url(#g-bfolder)"/></svg></div>
  <div class="app"><svg viewBox="0 0 62 62"><path d="M4 4l6 53q2 7 21 7t21-7l6-53z" fill="url(#g-bin)"/><ellipse cx="31" cy="4" rx="27" ry="6" fill="#4e5257" stroke="#7e8388" stroke-width="1.200"/><path d="M10 56q2 8 21 8t21-8q-20 8-42 0z" fill="#b5b8bb" opacity=".5"/></svg></div>
</footer>

<svg class="cursor" viewBox="0 0 26 40"><path d="M2 2v28l6-6 5 12 6-3-5-11h9z" fill="#000" stroke="#fff" stroke-width="2.400"/></svg>
</body>
</html>
```
FILE: styles.css
```css
* { box-sizing: border-box; }
body {
  margin: 0;
  width: 2880px;
  height: 1800px;
  overflow: hidden;
  position: relative;
  background: linear-gradient(90deg, #19244a, #182346 50%, #1f2b52);
  font-family: Inter, "Liberation Sans", sans-serif;
  color: #fff;
}
svg { display: block; overflow: visible; }
.defs { position: absolute; }
.ln { fill: none; stroke: #fff; stroke-width: 2; stroke-linejoin: round; }
.ln.dim { stroke: #878787; }

/* macOS menu bar */
.menubar {
  height: 50px;
  display: flex;
  justify-content: space-between;
  background: #172447;
  color: #e6e7ec;
  font-size: 26px;
  line-height: 47px;
  letter-spacing: -.25px;
  white-space: nowrap;
  text-shadow: 0 2px 5px rgba(0, 0, 0, .3);
}
.menus {
  display: grid;
  grid-template-columns: 67px 236px 84px 88px 100px 127px 151px 106px 132px 84px 138px 80px;
  padding-left: 39px;
}
.menus b { font-weight: 700; letter-spacing: .18px; }
.apple { width: 34px; height: 32px; margin: 6px 0 0 -3px; fill: #e6e7ec; }
.status {
  display: grid;
  grid-template-columns: 80px 70px 70px 70px 86px 70px 70px 64px 70px 56px 84px 62px 64px 154px 110px;
}
.status svg { width: 100%; height: 49px; }
.status span { padding-left: 6px; letter-spacing: .1px; }
.status .pct { font-size: 22px; line-height: 48px; letter-spacing: -.2px; }
.status .clock { padding-left: 0; letter-spacing: 1px; }

/* Browser window */
.window {
  height: 1638px;
  display: flex;
  flex-direction: column;
  position: relative;
  border-radius: 20px;
  overflow: hidden;
  box-shadow: 0 0 0 1px #000, 0 30px 60px 20px rgba(0, 0, 0, .75);
  background: #87cefa;
}
.window::after {
  content: "";
  position: absolute;
  inset: 0;
  border: 2px solid rgba(255, 255, 255, .24);
  border-radius: 20px;
  pointer-events: none;
}
.tabstrip {
  height: 80px;
  display: flex;
  padding-left: 42px;
  background: #1b1b1b;
}
.lights { display: flex; gap: 16px; padding-top: 29px; }
.lights i { width: 24px; height: 24px; border-radius: 50%; }
.red { background: #ff5f57; }
.amber { background: #febc2e; }
.green { background: #28c840; }
.vtabs { width: 28px; height: 28px; margin: 34px 32px 0 58px; }
.tab {
  width: 480px;
  height: 64px;
  margin-top: 16px;
  padding: 0 24px 1px 22px;
  display: flex;
  align-items: center;
  gap: 20px;
  position: relative;
  background: #3b3b3b;
  border-radius: 8px 8px 0 0;
  font-size: 24px;
  letter-spacing: -.1px;
  box-shadow: 0 -1px 4px #0c0c0c;
}
.tab::before, .tab::after {
  content: "";
  position: absolute;
  bottom: 0;
  width: 8px;
  height: 8px;
}
.tab::before { left: -8px; background: radial-gradient(circle at 0 0, #1b1b1b 8px, #3b3b3b 8.500px); }
.tab::after { right: -8px; background: radial-gradient(circle at 100% 0, #1b1b1b 8px, #3b3b3b 8.500px); }
.close { width: 18px; height: 18px; margin-left: auto; }
.plus { width: 28px; height: 28px; margin: 33px 0 0 21px; }

.toolbar {
  height: 76px;
  position: relative;
  display: grid;
  grid-template-columns: 100px 90px 90px 96px 1504px 90px 86px 88px 88px 88px 20px 80px 88px 88px 94px 90px 100px;
  align-items: center;
  background: #3b3b3b;
}
.toolbar > svg { width: 100%; height: 76px; }
.omnibox {
  height: 60px;
  margin-right: 10px;
  display: flex;
  align-items: center;
  padding: 0 18px 0 28px;
  background: #2a2a2a;
  border-radius: 8px;
  font-size: 28px;
  letter-spacing: -.1px;
}
.omnibox em { color: #8d8d8d; font-style: normal; }
.info { width: 32px; height: 32px; margin-right: 28px; }
.star { width: 40px; height: 38px; margin-left: auto; }

.favorites {
  height: 66px;
  display: grid;
  grid-template-columns: 132px 152px 174px 144px 144px 222px 128px 160px 216px 64px 64px 220px 64px 306px 340px 48px 24px 230px;
  align-items: center;
  padding: 0 0 8px 28px;
  background: #3b3b3b;
  border-bottom: 2px solid #626365;
  font-size: 24px;
  line-height: 30px;
  letter-spacing: -.25px;
  white-space: nowrap;
}
.favorites a { display: flex; align-items: center; gap: 16px; }
.favorites svg { width: 32px; height: 32px; flex: none; }
.favorites .floppy { width: 24px; height: 24px; margin: 0 -3px 0 0; }
.favorites .other { letter-spacing: -.05px; }
.wordle { font: 800 25px Inter, sans-serif; fill: #fff; text-anchor: middle; }
.divider { width: 4px; height: 32px; background: #5f5f5f; }

/* Web page */
.page {
  flex: 1;
  padding: 0 120px;
  display: flex;
  flex-direction: column;
  justify-content: center;
  background: #87cefa;
}
.card {
  height: 452px;
  display: flex;
  flex-direction: column;
  align-items: center;
  padding-top: 32px;
  background: #fff;
  border: 6px solid #000;
}
.card h1 {
  margin: 0 0 48px;
  font-size: 79px;
  line-height: 96px;
  font-weight: 500;
  letter-spacing: -3.050px;
  color: #212529;
}
.card button {
  width: 200px;
  height: 76px;
  margin: 0 0 32px;
  padding: 0;
  border: 0;
  border-radius: 8px;
  background: #0d6efd;
  color: #fff;
  font: 400 32px Inter, sans-serif;
  letter-spacing: -.8px;
}

/* Dock */
.dock {
  position: absolute;
  left: 62px;
  top: 1692px;
  width: 2757px;
  height: 98px;
  display: flex;
  padding: 13px 0 0 3.500px;
  background: #1d2541;
  border: 2px solid #41475e;
  border-radius: 30px;
  box-shadow: 0 0 0 1px #10162b, 0 0 56px rgba(0, 0, 0, .24);
}
.app {
  flex: 0 0 81px;
  display: flex;
  justify-content: center;
  position: relative;
}
.app > svg { width: 61.500px; height: 61.500px; }
.app > .nudge { margin-right: 4px; }
.app.on::after {
  content: "";
  position: absolute;
  top: 71px;
  width: 8px;
  height: 8px;
  border-radius: 50%;
  background: #9ba1bf;
}
.badge {
  position: absolute;
  top: -7px;
  right: 2px;
  width: 28px;
  height: 28px;
  border-radius: 50%;
  background: #f33c34;
  font-size: 15px;
  font-weight: 500;
  line-height: 28px;
  text-align: center;
}
.split {
  flex: 0 0 2px;
  height: 70px;
  margin: -1px 16px 0 17px;
  background: #50576f;
}
.split ~ .split { margin-left: 19px; }
.glyph { font-family: Inter, sans-serif; fill: #fff; text-anchor: middle; }
.serif { font-family: "Liberation Serif", serif; fill: #3d3f41; text-anchor: middle; }
.sans { font-family: "Open Sans", sans-serif; fill: #3d3f41; text-anchor: middle; }
.day { font: 300 38px Inter, sans-serif; fill: #2b2b2b; text-anchor: middle; letter-spacing: -1px; }
.prompt { font: 700 16px "Liberation Mono", monospace; fill: #17d91e; text-anchor: middle; }

.cursor { position: absolute; left: 1545px; top: 697px; width: 26px; height: 40px; filter: drop-shadow(0 2px 2px rgba(0, 0, 0, .4)); }
```
